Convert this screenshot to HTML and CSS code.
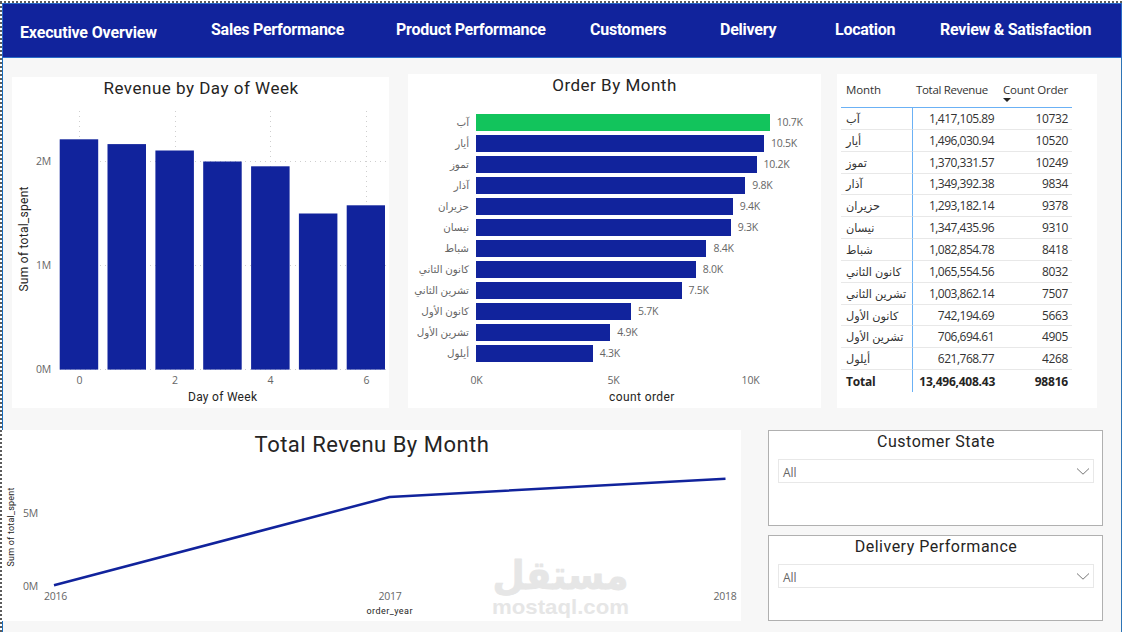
FILE: index.html
```
<!DOCTYPE html>
<html lang="en">
<head>
  <meta charset="UTF-8">
  <title>Executive Overview</title>
  <link rel="stylesheet" href="styles.css">
</head>
<body>
  <div class="report">
    <nav class="topnav">
      <a class="active">Executive Overview</a>
      <a>Sales Performance</a>
      <a>Product Performance</a>
      <a>Customers</a>
      <a>Delivery</a>
      <a>Location</a>
      <a>Review &amp; Satisfaction</a>
    </nav>

    <div class="row-top">
      <section class="card day-card">
        <h2>Revenue by Day of Week</h2>
        <svg class="day-chart" width="377" height="308" viewBox="12 100 377 308">
          <g class="grid">
            <path d="M79.5 111V369M175.5 111V369M270.5 111V369M366.5 111V369"/>
            <path d="M60 161.5H386M60 265.5H386M60 369.5H386"/>
          </g>
          <g class="bars">
            <rect x="59.7" y="139.3" width="38.5" height="230.3"/>
            <rect x="107.5" y="144.1" width="38.5" height="225.5"/>
            <rect x="155.4" y="150.5" width="38.5" height="219.1"/>
            <rect x="203.2" y="161.5" width="38.5" height="208.1"/>
            <rect x="251.1" y="166.3" width="38.5" height="203.3"/>
            <rect x="298.9" y="213.5" width="38.5" height="156.1"/>
            <rect x="346.7" y="205.3" width="38.3" height="164.3"/>
          </g>
          <g class="tick end">
            <text x="51" y="165">2M</text>
            <text x="51" y="269">1M</text>
            <text x="51" y="373">0M</text>
          </g>
          <g class="tick mid">
            <text x="79.5" y="384">0</text>
            <text x="175" y="384">2</text>
            <text x="270.5" y="384">4</text>
            <text x="366.5" y="384">6</text>
          </g>
          <text class="axis" x="188" y="401" textLength="69">Day of Week</text>
          <text class="axis" transform="translate(28 291.5) rotate(-90)" textLength="105">Sum of total_spent</text>
        </svg>
      </section>

      <section class="card order-card">
        <h2>Order By Month</h2>
        <div class="hbars" id="hbars"></div>
        <div class="hticks"><span>0K</span><span>5K</span><span>10K</span></div>
        <div class="haxis">count order</div>
      </section>

      <section class="card table-card">
        <table>
          <thead>
            <tr><th>Month</th><th>Total Revenue</th><th><span class="sorted">Count Order</span></th></tr>
          </thead>
          <tbody id="months"></tbody>
          <tfoot>
            <tr><td>Total</td><td>13,496,408.43</td><td>98816</td></tr>
          </tfoot>
        </table>
      </section>
    </div>

    <div class="row-bottom">
      <section class="card year-card">
        <h2>Total Revenu By Month</h2>
        <svg class="year-chart" width="738" height="161" viewBox="3 460 738 161">
          <polyline class="line" points="54,585.2 389.5,497 725.5,478.8"/>
          <g class="tick end">
            <text x="38" y="517">5M</text>
            <text x="38" y="590">0M</text>
          </g>
          <g class="tick mid">
            <text x="55.5" y="600">2016</text>
            <text x="390" y="600">2017</text>
            <text x="725" y="600">2018</text>
          </g>
          <text class="axis small" x="366.5" y="614" textLength="46">order_year</text>
          <text class="axis small" transform="translate(14 566.5) rotate(-90)" textLength="79">Sum of total_spent</text>
          <text class="mark-ar" x="560.5" y="589" textLength="136" lengthAdjust="spacingAndGlyphs">مستقل</text>
          <text class="mark-en" x="492" y="614" textLength="137" lengthAdjust="spacingAndGlyphs">mostaql.com</text>
        </svg>
      </section>

      <div class="slicers">
        <section class="slicer">
          <h2>Customer State</h2>
          <div class="dropdown">
            <span>All</span>
            <svg width="14" height="9" viewBox="0 0 14 9"><path d="M1 1.5L7 7.2L13 1.5"/></svg>
          </div>
        </section>
        <section class="slicer slicer-short">
          <h2>Delivery Performance</h2>
          <div class="dropdown">
            <span>All</span>
            <svg width="14" height="9" viewBox="0 0 14 9"><path d="M1 1.5L7 7.2L13 1.5"/></svg>
          </div>
        </section>
      </div>
    </div>
  </div>

  <script>
    const months = [
      ['آب', '1,417,105.89', 10732],
      ['أيار', '1,496,030.94', 10520],
      ['تموز', '1,370,331.57', 10249],
      ['آذار', '1,349,392.38', 9834],
      ['حزيران', '1,293,182.14', 9378],
      ['نيسان', '1,347,435.96', 9310],
      ['شباط', '1,082,854.78', 8418],
      ['كانون الثاني', '1,065,554.56', 8032],
      ['تشرين الثاني', '1,003,862.14', 7507],
      ['كانون الأول', '742,194.69', 5663],
      ['تشرين الأول', '706,694.61', 4905],
      ['أيلول', '621,768.77', 4268]
    ];
    const pxPerOrder = 0.02737;

    document.getElementById('hbars').innerHTML = months.map(([name, , count], i) => `
      <div class="hrow">
        <span class="hname">${name}</span>
        <span class="hbar${i === 0 ? ' top' : ''}" style="width:${(count * pxPerOrder).toFixed(1)}px"></span>
        <span class="hval">${(count / 1000).toFixed(1)}K</span>
      </div>`).join('');

    document.getElementById('months').innerHTML = months.map(([name, revenue, count]) =>
      `<tr><td>${name}</td><td>${revenue}</td><td>${count}</td></tr>`).join('');
  </script>
</body>
</html>
```
FILE: styles.css
```
* { box-sizing: border-box; }
body { margin: 0; background: #f7f7f7; font-family: "Open Sans", "DejaVu Sans", sans-serif; color: #252423; }
h2 { margin: 0; font: 400 17px/22px Roboto, sans-serif; letter-spacing: .5px; text-align: center; color: #252423; white-space: nowrap; }

.report {
  width: 1122px;
  height: 632px;
  padding: 3px 0 0 2px;
  overflow: hidden;
  background:
    linear-gradient(#fff, #fff) 0 0 / 100% 1px no-repeat,
    repeating-linear-gradient(90deg, #5c5c5c 0 2px, #fff 2px 4px) 0 1px / 100% 2px no-repeat,
    repeating-linear-gradient(#fff 0 2px, #5c5c5c 2px 4px) 0 0 / 2px 100% no-repeat,
    linear-gradient(#1a6fc0, #1a6fc0) 2px 3px / 1px 100% no-repeat,
    linear-gradient(#2e75b6, #2e75b6) 100% 3px / 1px 100% no-repeat,
    #f7f7f7;
}

.topnav {
  display: grid;
  grid-template-columns: 191px 185px 194px 130px 115px 105px 1fr;
  align-items: center;
  height: 55px;
  padding: 0 0 2px 17px;
  background: #11239c;
  border: 1px solid #2a6cc8;
}
.topnav a { font: 700 16px/20px Roboto, sans-serif; letter-spacing: -.25px; color: #fff; white-space: nowrap; }
.topnav .active { padding-top: 7px; letter-spacing: -.15px; }

.card { background: #fff; }
.row-top { display: flex; padding: 16px 0 0 10px; height: 350px; }
.day-card { width: 377px; margin-top: 3px; }
.order-card { width: 413px; margin-left: 19px; }
.table-card { width: 260px; margin-left: 16px; }
.day-card h2 { height: 23px; padding-left: 1px; }
svg { display: block; }

.grid path { fill: none; stroke: #cfcfcf; stroke-width: 1; stroke-dasharray: 1 4; }
.bars rect { fill: #11239c; }
.tick text { font-size: 10.5px; fill: #666; letter-spacing: -.2px; }
.end text { text-anchor: end; }
.mid text { text-anchor: middle; }
.axis { font: 12px Roboto, sans-serif; fill: #252423; }
.axis.small { font-size: 9px; }
.line { fill: none; stroke: #11239c; stroke-width: 2.5; stroke-linejoin: round; }

.hbars { padding-top: 16px; }
.hrow { display: flex; align-items: center; height: 21px; }
.hname { display: flex; width: 61px; margin-right: 7px; padding-bottom: 1px; font-size: 10.3px; line-height: 17px; color: #666; white-space: nowrap; direction: rtl; }
.hbar { height: 17px; background: #11239c; }
.hbar.top { background: #12c45c; }
.hval { margin-left: 7px; padding-bottom: 1px; font-size: 10.5px; letter-spacing: -.25px; color: #666; }
.hticks { display: flex; margin-top: 9px; font-size: 10.5px; line-height: 15px; letter-spacing: -.2px; color: #666; }
.hticks span { flex: none; width: 137px; text-align: center; }
.haxis { margin: 2px 0 0 201px; font: 12px/14px Roboto, sans-serif; letter-spacing: .4px; }

table { border-collapse: separate; border-spacing: 0; table-layout: fixed; width: 231px; margin: 6px 0 0 4px; font-size: 12px; letter-spacing: -.35px; color: #333; }
th, td { padding: 0 4px 0 0; text-align: right; line-height: 18px; white-space: nowrap; }
th { height: 28px; padding-bottom: 8px; font-size: 11.5px; font-weight: 400; letter-spacing: -.3px; border-bottom: 1px solid #6bb1f5; }
td { height: 21.85px; padding-top: 1px; border-bottom: 1px solid #e8e8e8; }
th:first-child, td:first-child { width: 72px; padding-left: 5px; padding-right: 0; text-align: left; }
th:first-child { letter-spacing: -.1px; }
td:first-child { border-right: 1px solid #6bb1f5; }
th:nth-child(2) { width: 86px; padding-right: 11px; }
th:nth-child(3) { letter-spacing: -.2px; }
tbody td:first-child { font-size: 11.3px; letter-spacing: 0; }
tbody td:nth-child(2) { padding-right: 5px; letter-spacing: -.5px; }
tfoot td { font-weight: 700; color: #252423; border-bottom: 0; letter-spacing: -.2px; }
tfoot td:nth-child(2) { letter-spacing: -.25px; }
.sorted { position: relative; }
.sorted::after { content: ""; position: absolute; left: 0; bottom: -5px; border: 4px solid transparent; border-top-color: #252423; border-bottom: 0; }

.row-bottom { display: flex; margin-top: 22px; }
.year-card { width: 739px; height: 191px; padding-left: 1px; }
.year-card h2 { height: 30px; font-size: 22px; line-height: 29px; letter-spacing: .5px; }
.slicers { width: 335px; margin-left: 27px; }
.slicer { height: 96px; background: #fff; border: 1px solid #b0b0b0; }
.slicer h2 { padding-left: 1px; font-size: 16px; line-height: 22px; letter-spacing: .5px; }
.slicer-short { height: 86px; margin-top: 9px; }
.dropdown { display: flex; align-items: center; justify-content: space-between; width: 316px; height: 24px; margin: 6px 0 0 9px; padding: 0 3px 0 4px; border: 1px solid #e8e8e8; font-size: 12px; color: #666; }
.dropdown span { padding-top: 3px; }
.dropdown path { fill: none; stroke: #777; stroke-width: 1; }

.mark-ar { font: 700 40px "DejaVu Sans", sans-serif; fill: #e6e6e6; stroke: #e6e6e6; stroke-width: .8; stroke-linejoin: round; text-anchor: middle; }
.mark-en { font: 700 21px "Liberation Sans", sans-serif; fill: #e6e6e6; }
```
